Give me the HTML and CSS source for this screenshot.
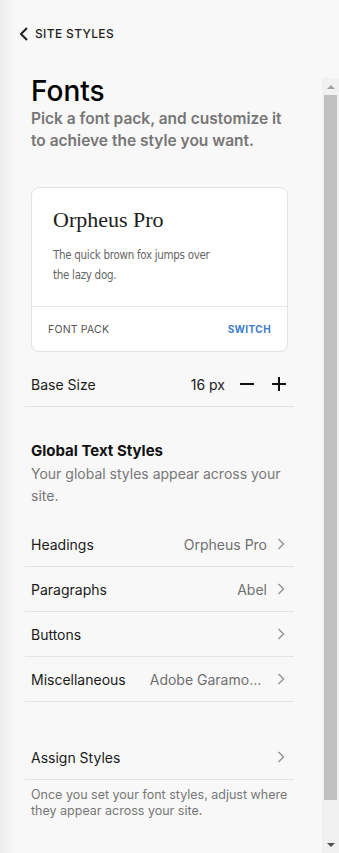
FILE: index.html
```html
<!DOCTYPE html>
<html lang="en">
<head>
  <meta charset="UTF-8" />
  <meta name="viewport" content="width=device-width, initial-scale=1.0" />
  <title>Fonts</title>
  <link rel="stylesheet" href="styles.css">
</head>
<body>
  <div class="header">
    <svg class="back-icon" width="10" height="14" viewBox="0 0 10 14">
      <polyline points="8,1 2,7 8,13" fill="none" stroke="#222" stroke-width="2" />
    </svg>
    <span class="back-label">SITE STYLES</span>
  </div>

  <div class="pane">
    <div class="content">
      <h1>Fonts</h1>
      <p class="intro">Pick a font pack, and customize it to achieve the style you want.</p>

      <div class="pack-card">
        <div class="pack-preview">
          <div class="pack-name">Orpheus Pro</div>
          <div class="pack-sample">The quick brown fox jumps over<br>the lazy dog.</div>
        </div>
        <div class="pack-footer">
          <span class="pack-label">FONT PACK</span>
          <span class="pack-switch">SWITCH</span>
        </div>
      </div>

      <div class="row base-row">
        <span class="row-label">Base Size</span>
        <span class="base-value">16 px</span>
        <svg class="step-icon" width="16" height="16" viewBox="0 0 16 16">
          <line x1="1" y1="8" x2="15" y2="8" stroke="#111" stroke-width="2" />
        </svg>
        <svg class="step-icon" width="16" height="16" viewBox="0 0 16 16">
          <line x1="1" y1="8" x2="15" y2="8" stroke="#111" stroke-width="2" />
          <line x1="8" y1="1" x2="8" y2="15" stroke="#111" stroke-width="2" />
        </svg>
      </div>

      <div class="section">
        <h2>Global Text Styles</h2>
        <p class="section-desc">Your global styles appear across your site.</p>
      </div>

      <div class="list">
        <div class="row">
          <span class="row-label">Headings</span>
          <span class="row-value">Orpheus Pro</span>
          <svg class="chevron" width="8" height="12" viewBox="0 0 8 12"><polyline points="1.5,1 6.5,6 1.5,11" fill="none" stroke="#9a9a9a" stroke-width="1.6" /></svg>
        </div>
        <div class="row">
          <span class="row-label">Paragraphs</span>
          <span class="row-value">Abel</span>
          <svg class="chevron" width="8" height="12" viewBox="0 0 8 12"><polyline points="1.5,1 6.5,6 1.5,11" fill="none" stroke="#9a9a9a" stroke-width="1.6" /></svg>
        </div>
        <div class="row">
          <span class="row-label">Buttons</span>
          <span class="row-value"></span>
          <svg class="chevron" width="8" height="12" viewBox="0 0 8 12"><polyline points="1.5,1 6.5,6 1.5,11" fill="none" stroke="#9a9a9a" stroke-width="1.6" /></svg>
        </div>
        <div class="row">
          <span class="row-label">Miscellaneous</span>
          <span class="row-value">Adobe Garamond Pro</span>
          <svg class="chevron" width="8" height="12" viewBox="0 0 8 12"><polyline points="1.5,1 6.5,6 1.5,11" fill="none" stroke="#9a9a9a" stroke-width="1.6" /></svg>
        </div>
      </div>

      <div class="assign">
        <div class="row">
          <span class="row-label">Assign Styles</span>
          <span class="row-value"></span>
          <svg class="chevron" width="8" height="12" viewBox="0 0 8 12"><polyline points="1.5,1 6.5,6 1.5,11" fill="none" stroke="#9a9a9a" stroke-width="1.6" /></svg>
        </div>
        <p class="assign-desc">Once you set your font styles, adjust where they appear across your site.</p>
      </div>
    </div>

    <div class="scrollbar">
      <div class="scroll-btn"><span class="arrow-up"></span></div>
      <div class="scroll-thumb"></div>
      <div class="scroll-space"></div>
      <div class="scroll-btn"><span class="arrow-down"></span></div>
    </div>
  </div>
</body>
</html>
```

FILE: styles.css
```css
body {
  margin: 0;
  height: 853px;
  overflow: hidden;
  font-family: 'Inter', 'Liberation Sans', sans-serif;
  color: #1a1a1a;
  background: linear-gradient(to right, #ececec 0, #f8f8f8 16px) #f8f8f8;
}
.header {
  height: 74px;
  box-sizing: border-box;
  padding: 26px 0 0 19px;
  display: flex;
  align-items: flex-start;
  gap: 6px;
}
.back-icon {
  margin-top: 1px;
}
.back-label {
  font-size: 12px;
  font-weight: 500;
  letter-spacing: 0.35px;
  line-height: 16px;
  color: #231f20;
}
.pane {
  display: flex;
  height: 779px;
}
.content {
  flex: 1;
  min-width: 0;
  padding: 0 28px 0 25px;
}
h1 {
  margin: 0;
  padding: 0 6px;
  font-size: 28px;
  line-height: 34px;
  font-weight: 500;
  color: #000;
}
.intro {
  margin: 0;
  padding: 0 6px;
  font-size: 15.5px;
  line-height: 22px;
  font-weight: 600;
  color: #767676;
}
.pack-card {
  margin: 35px 6px 0;
  background: #fff;
  border: 1px solid #e3e3e3;
  border-radius: 8px;
}
.pack-preview {
  padding: 17px 21px 21px;
}
.pack-name {
  font-family: 'Liberation Serif', serif;
  font-size: 22px;
  line-height: 30px;
  color: #1c1c1c;
}
.pack-sample {
  margin-top: 10px;
  font-family: 'Liberation Sans Narrow', 'DejaVu Sans Condensed', sans-serif;
  font-size: 11.5px;
  letter-spacing: -0.3px;
  line-height: 20px;
  color: #666;
}
.pack-footer {
  display: flex;
  justify-content: space-between;
  align-items: center;
  height: 44px;
  padding: 0 16px;
  border-top: 1px solid #e6e6e6;
}
.pack-label {
  font-size: 10.5px;
  letter-spacing: 0.2px;
  color: #555;
}
.pack-switch {
  font-size: 10px;
  font-weight: 700;
  letter-spacing: 0.4px;
  color: #3d7cc9;
}
.row {
  display: flex;
  align-items: center;
  height: 44px;
  padding: 0 9px 0 6px;
  border-bottom: 1px solid #e4e4e4;
  font-size: 14px;
}
.row-label {
  flex-shrink: 0;
  color: #1a1a1a;
}
.row-value {
  flex: 1;
  min-width: 0;
  margin-left: 24px;
  text-align: right;
  white-space: nowrap;
  overflow: hidden;
  text-overflow: ellipsis;
  color: #707070;
}
.chevron {
  flex-shrink: 0;
  margin-left: 10px;
}
.base-row {
  margin-top: 10px;
  padding-right: 7px;
}
.base-value {
  margin-left: auto;
  margin-right: 14px;
}
.step-icon + .step-icon {
  margin-left: 16px;
}
.section {
  padding: 33px 6px 0;
}
h2 {
  margin: 0;
  font-size: 15px;
  line-height: 22px;
  font-weight: 700;
  color: #111;
}
.section-desc {
  margin: 1px 0 0;
  font-size: 14px;
  line-height: 22px;
  color: #777;
}
.list {
  margin-top: 15px;
}
.assign {
  margin-top: 33px;
}
.assign-desc {
  margin: 7px 0 0;
  padding: 0 6px;
  font-size: 12.5px;
  line-height: 16px;
  color: #777;
}
.scrollbar {
  flex-shrink: 0;
  width: 17px;
  margin-top: 4px;
  background: #f1f1f1;
  display: flex;
  flex-direction: column;
}
.scroll-btn {
  height: 17px;
  display: flex;
  align-items: center;
  justify-content: center;
}
.arrow-up {
  border-left: 4px solid transparent;
  border-right: 4px solid transparent;
  border-bottom: 4px solid #a3a3a3;
}
.arrow-down {
  border-left: 4px solid transparent;
  border-right: 4px solid transparent;
  border-top: 4px solid #505050;
}
.scroll-thumb {
  height: 705px;
  margin: 0 2px;
  background: #c1c1c1;
}
.scroll-space {
  flex: 1;
}
```
